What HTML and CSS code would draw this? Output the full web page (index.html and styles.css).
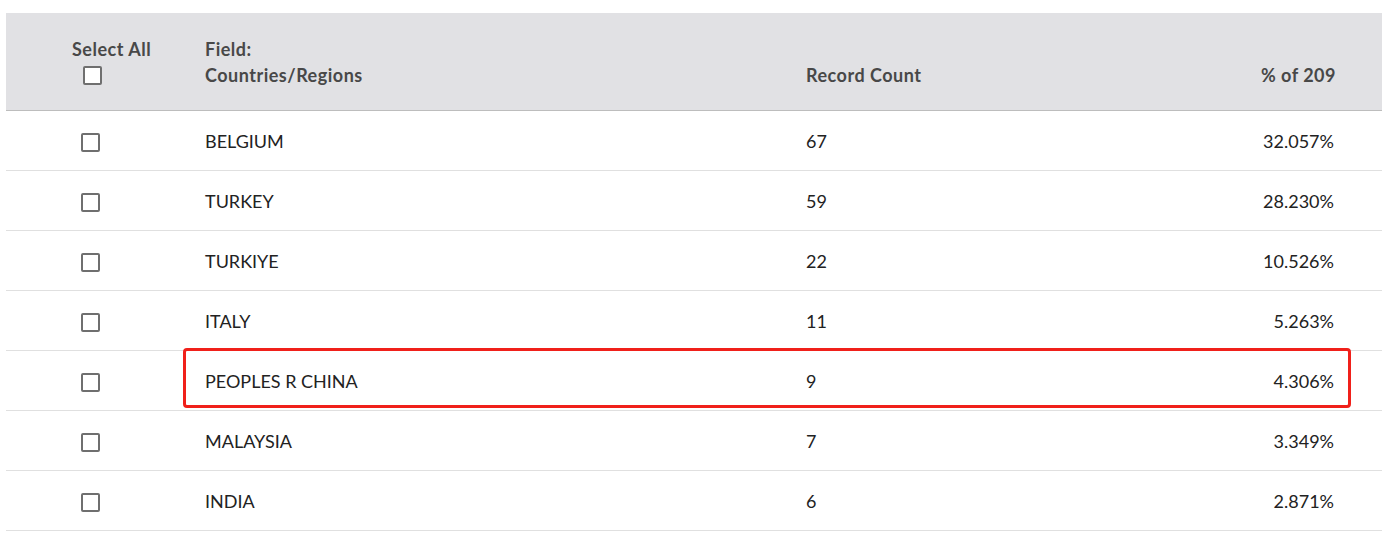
FILE: index.html
```html
<!DOCTYPE html>
<html>
<head>
<meta charset="utf-8">
<link rel="stylesheet" href="styles.css">
</head>
<body>
<div class="table">
  <div class="head">
    <div class="c-check">
      <span class="sel-label">Select All</span>
      <span class="box"></span>
    </div>
    <div class="c-field">Field:<br>Countries/Regions</div>
    <div class="c-count">Record Count</div>
    <div class="c-pct">% of 209</div>
  </div>
  <div class="row"><div class="c-check"><span class="box"></span></div><div class="c-field">BELGIUM</div><div class="c-count">67</div><div class="c-pct">32.057%</div></div>
  <div class="row"><div class="c-check"><span class="box"></span></div><div class="c-field">TURKEY</div><div class="c-count">59</div><div class="c-pct">28.230%</div></div>
  <div class="row"><div class="c-check"><span class="box"></span></div><div class="c-field">TURKIYE</div><div class="c-count">22</div><div class="c-pct">10.526%</div></div>
  <div class="row"><div class="c-check"><span class="box"></span></div><div class="c-field">ITALY</div><div class="c-count">11</div><div class="c-pct">5.263%</div></div>
  <div class="row highlighted"><div class="c-check"><span class="box"></span></div><div class="c-field">PEOPLES R CHINA</div><div class="c-count">9</div><div class="c-pct">4.306%</div><span class="mark"></span></div>
  <div class="row"><div class="c-check"><span class="box"></span></div><div class="c-field">MALAYSIA</div><div class="c-count">7</div><div class="c-pct">3.349%</div></div>
  <div class="row"><div class="c-check"><span class="box"></span></div><div class="c-field">INDIA</div><div class="c-count">6</div><div class="c-pct">2.871%</div></div>
</div>
</body>
</html>
```
FILE: styles.css
```css
html, body { margin: 0; padding: 0; background: #fff; }
body {
  font-family: Lato, "Liberation Sans", sans-serif;
  font-size: 18px;
  color: #222;
  padding: 13px 0 0 6px;
}
.table { width: 1376px; }
.head, .row {
  display: grid;
  grid-template-columns: 199px 601px 1fr 150px;
}
.head {
  background: #e1e1e4;
  height: 98px;
  border-bottom: 1px solid #bdbdbd;
  box-sizing: border-box;
  font-size: 18px;
  font-weight: 700;
  letter-spacing: 0.5px;
  color: #484848;
  line-height: 26px;
  align-items: start;
}
.head .c-check {
  display: flex;
  flex-direction: column;
  align-items: flex-start;
  padding-top: 23px;
  padding-left: 66px;
}
.head .c-check .box { margin-top: 4px; margin-left: 11px; }
.head .c-field { padding-top: 23px; }
.head .c-count, .head .c-pct { padding-top: 49px; }
.c-pct { text-align: right; padding-right: 47px; }
.head .c-pct { padding-right: 46px; }
.row {
  height: 60px;
  border-bottom: 1px solid #e0e0e0;
  box-sizing: border-box;
  align-items: center;
  position: relative;
  line-height: 20px;
}
.row .c-check { display: flex; padding-left: 75px; padding-top: 4px; }
.row .c-field, .row .c-count, .row .c-pct { padding-top: 1px; }
.row .c-pct { padding-right: 48px; }
.box {
  display: block;
  width: 19px;
  height: 19px;
  box-sizing: border-box;
  border: 2px solid #6f6f6f;
  border-radius: 2px;
  background: #fff;
}
.mark {
  position: absolute;
  left: 177px;
  top: -3px;
  width: 1168px;
  height: 60px;
  box-sizing: border-box;
  border: 3px solid #f0201a;
  border-radius: 4px;
  pointer-events: none;
}
```
